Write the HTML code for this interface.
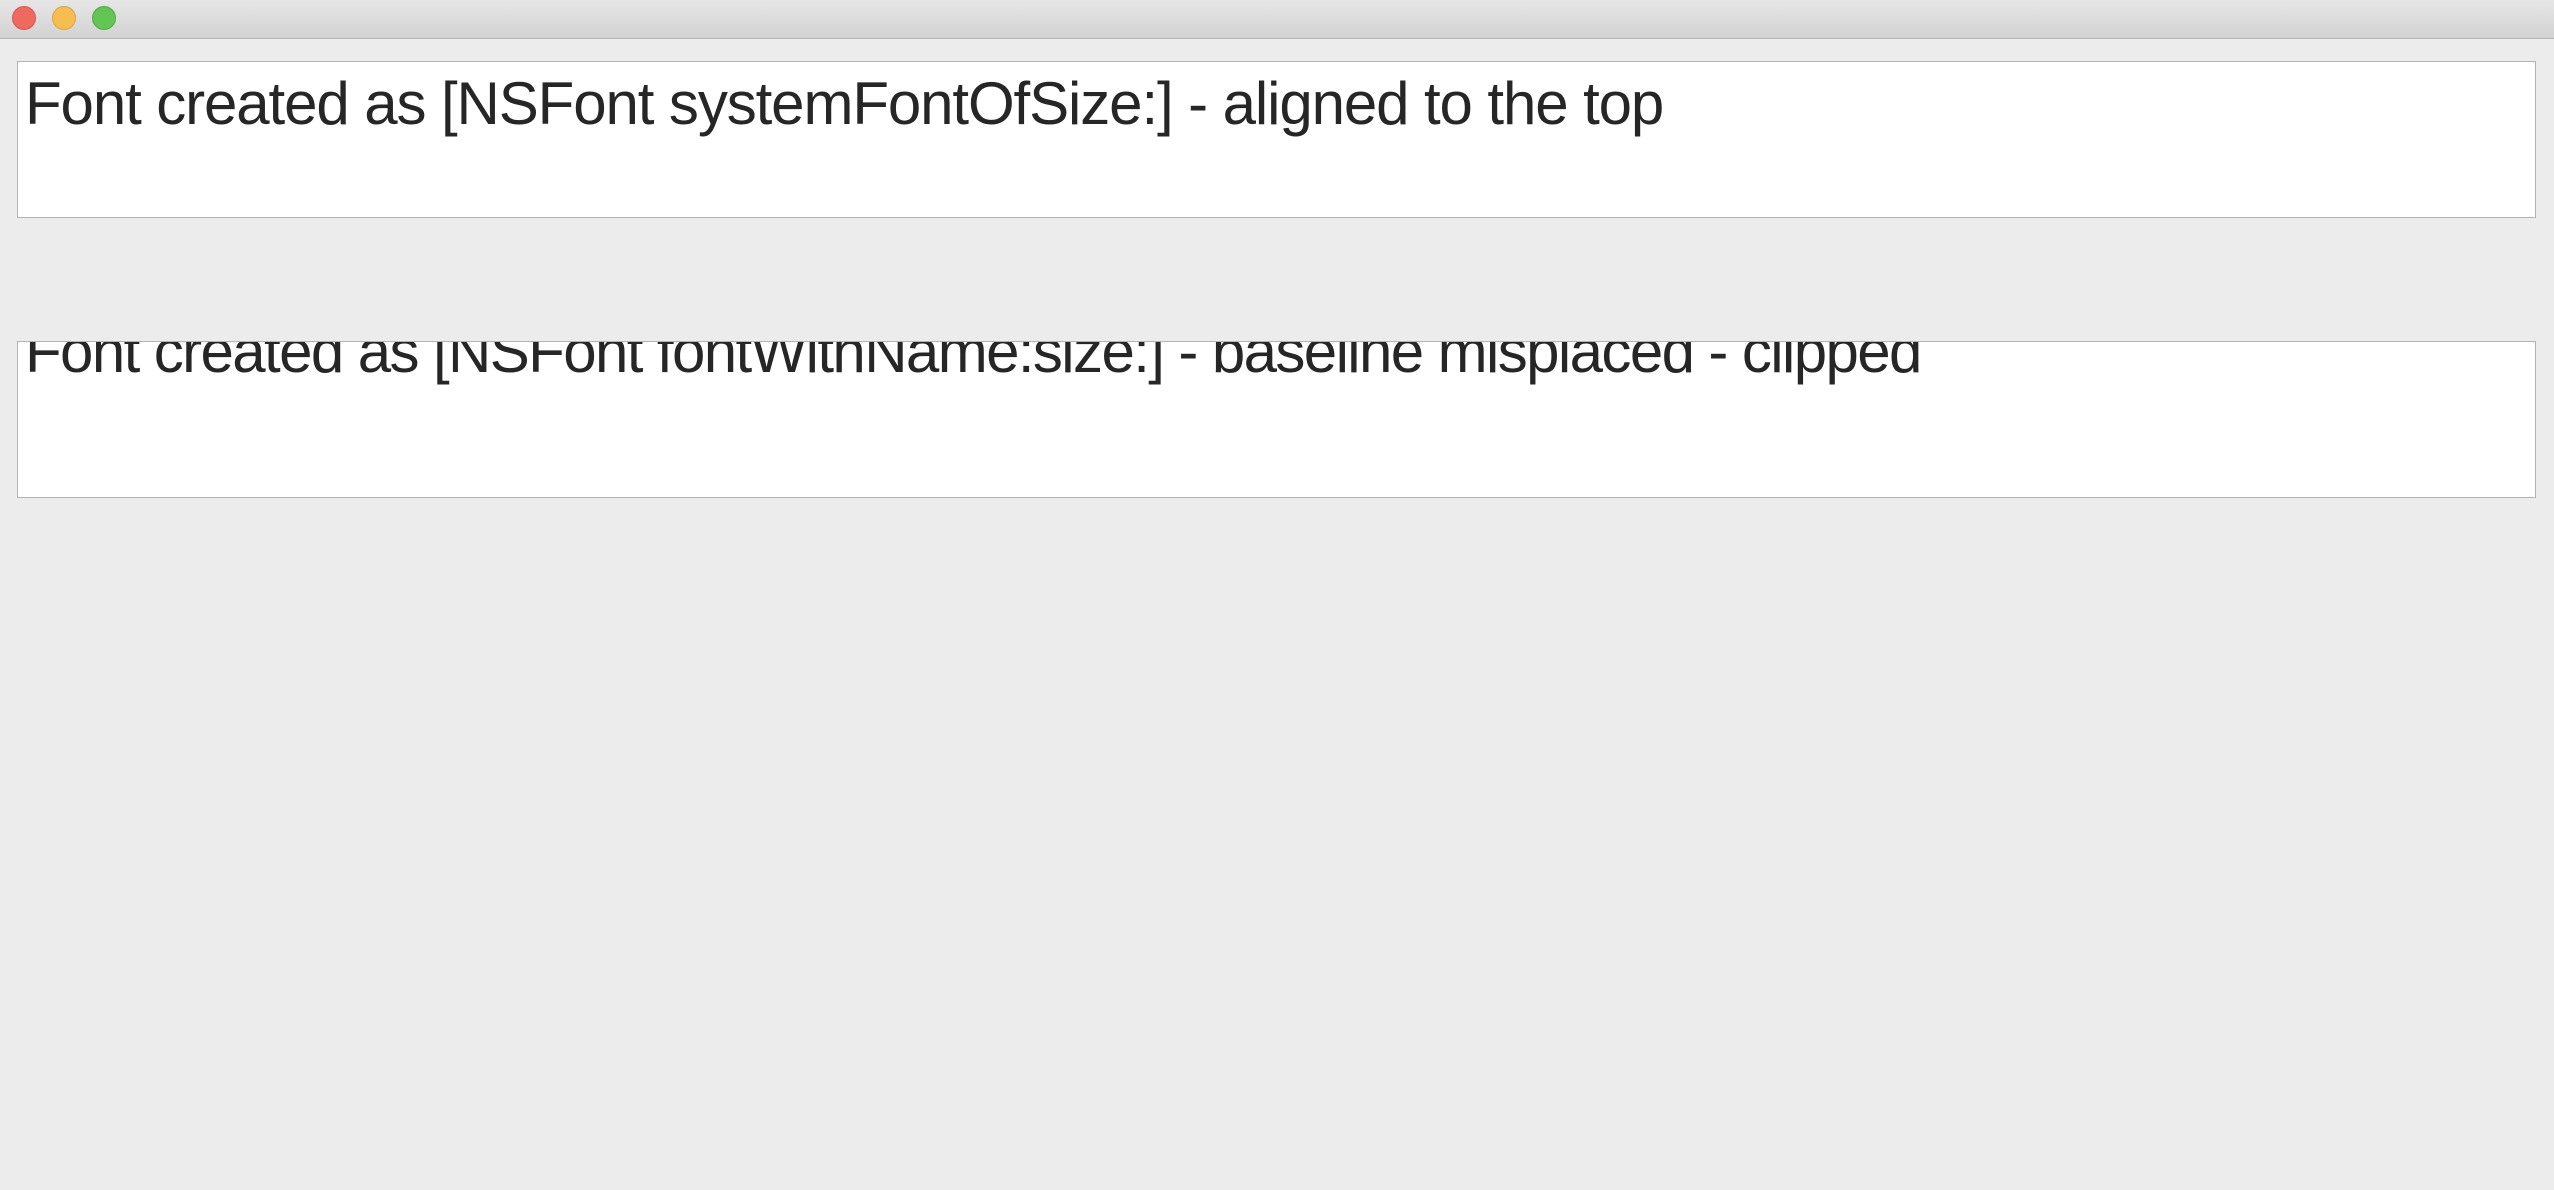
<!DOCTYPE html>
<html><head><style>
html,body{margin:0;padding:0;width:2554px;height:1190px;background:#ececec;overflow:hidden;position:relative;font-family:"Liberation Sans",sans-serif;}
.tb{position:absolute;left:0;top:0;width:2554px;height:38px;background:linear-gradient(#e6e6e6,#d2d2d2);border-bottom:1px solid #b4b4b4;}
.dot{position:absolute;top:6px;width:22px;height:22px;border-radius:50%;}
.box{position:absolute;left:17px;width:2517px;height:155px;background:#fff;border:1px solid #b3b3b3;overflow:hidden;}
.t{position:absolute;left:7px;font-size:60px;line-height:1;color:#262626;white-space:nowrap;}
</style></head><body>
<div class="tb">
<div class="dot" style="left:12px;background:#ee6a5f;border:1px solid #d8554b;"></div>
<div class="dot" style="left:52px;background:#f6be4f;border:1px solid #dba33c;"></div>
<div class="dot" style="left:92px;background:#62c554;border:1px solid #52a944;"></div>
</div>
<div class="box" style="top:61px;"><div class="t" style="top:12px;letter-spacing:-1.1px;">Font created as [NSFont systemFontOfSize:] - aligned to the top</div></div>
<div class="box" style="top:341px;"><div class="t" style="top:-20px;letter-spacing:-1.6px;">Font created as [NSFont fontWithName:size:] - baseline misplaced - clipped</div></div>
</body></html>
